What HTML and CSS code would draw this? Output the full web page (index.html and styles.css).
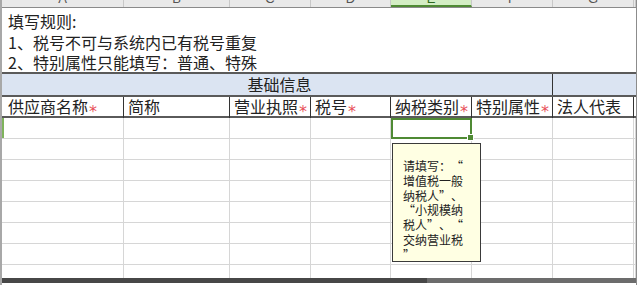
FILE: index.html
```html
<!DOCTYPE html>
<html lang="zh-CN">
<head>
    <meta charset="UTF-8">
    <title>供应商导入模板</title>
    <link rel="stylesheet" href="styles.css">
</head>
<body>
    <div class="sheet">
        <!-- 列标题 -->
        <div class="row colhead">
            <div class="col">A</div>
            <div class="col">B</div>
            <div class="col">C</div>
            <div class="col">D</div>
            <div class="col active">E</div>
            <div class="col">F</div>
            <div class="col">G</div>
            <div class="col"></div>
        </div>

        <!-- 填写规则 -->
        <div class="rules">
            <div>填写规则:</div>
            <div>1、税号不可与系统内已有税号重复</div>
            <div>2、特别属性只能填写：普通、特殊</div>
        </div>

        <!-- 分组标题 -->
        <div class="row band">
            <div class="cell merged">基础信息</div>
            <div class="cell"></div>
        </div>

        <!-- 字段 -->
        <div class="row head">
            <div class="cell">供应商名称<span class="req">*</span></div>
            <div class="cell">简称</div>
            <div class="cell">营业执照<span class="req">*</span></div>
            <div class="cell">税号<span class="req">*</span></div>
            <div class="cell">纳税类别<span class="req">*</span></div>
            <div class="cell">特别属性<span class="req">*</span></div>
            <div class="cell">法人代表</div>
            <div class="cell"></div>
        </div>

        <div class="body" id="rows"></div>

        <div class="scrollbar"><div class="thumb"></div></div>

        <!-- 批注 -->
        <div class="comment">
            请填写：<span class="q open">“</span><br>
            增值税一般<br>
            纳税人<span class="q close">”</span>、<br>
            <span class="q open">“</span>小规模纳<br>
            税人<span class="q close">”</span>、<span class="q open">“</span><br>
            交纳营业税<br>
            <span class="q close">”</span>
        </div>
    </div>

    <script>
        // 生成空白数据行
        var body = document.getElementById('rows');
        for (var r = 0; r < 8; r++) {
            var row = document.createElement('div');
            row.className = 'row data';
            for (var c = 0; c < 8; c++) {
                var cell = document.createElement('div');
                cell.className = 'cell';
                if (r === 0 && c === 0) cell.classList.add('row-mark');
                if (r === 0 && c === 4) {
                    cell.classList.add('selected');
                    var handle = document.createElement('span');
                    handle.className = 'handle';
                    cell.appendChild(handle);
                }
                row.appendChild(cell);
            }
            body.appendChild(row);
        }
    </script>
</body>
</html>
```

FILE: styles.css
```css
body {
    margin: 0;
    width: 640px;
    height: 285px;
    overflow: hidden;
    background: #ffffff;
    font-family: "Noto Sans CJK SC", "Noto Sans", sans-serif;
    color: #222;
}
.sheet {
    position: relative;
    width: 637px;
    height: 285px;
    border-left: 2px solid #a8a8a8;
    border-right: 1px solid #8c8c8c;
    box-sizing: border-box;
    overflow: hidden;
}
.row {
    display: grid;
    grid-template-columns: 122px 106px 81px 80px 81px 81px 81px 1fr;
}
.colhead {
    height: 7px;
    background: #e9e9e9;
    border-bottom: 1px solid #8a8a8a;
    overflow: hidden;
}
.col {
    font-family: "Liberation Sans", sans-serif;
    font-size: 13px;
    line-height: 13px;
    margin-top: -8px;
    text-align: center;
    color: #555;
    border-right: 1px solid #c8c8c8;
}
.col.active {
    background: #d3edc4;
    color: #2d6a1f;
    border-bottom: 2px solid #4f8a34;
}
.rules {
    height: 61px;
    padding: 3px 0 0 6px;
    font-size: 16px;
    line-height: 20.5px;
    border-bottom: 2px solid #5a5a5a;
}
.band {
    height: 21px;
    background: #dbe4f2;
    border-bottom: 2px solid #5a5a5a;
    font-size: 16px;
    line-height: 21px;
}
.band .merged {
    grid-column: 1 / 7;
    text-align: center;
    padding-left: 5px;
    border-right: 1px solid #333;
}
.head {
    height: 19px;
    font-size: 16px;
    line-height: 19px;
    border-bottom: 2px solid #5a5a5a;
}
.head .cell {
    padding-left: 4px;
    border-right: 1px solid #333;
    white-space: nowrap;
}
.head .cell:first-child {
    padding-left: 6px;
}
.head .cell:last-child {
    border-right: none;
}
.req {
    font-family: "DejaVu Sans", sans-serif;
    color: #e8505a;
    font-size: 16px;
    vertical-align: -4px;
    margin-left: 1px;
}
.body {
    height: 160px;
    overflow: hidden;
}
.data {
    height: 21px;
}
.data .cell {
    border-right: 1px solid #d6d6d6;
    border-bottom: 1px solid #d6d6d6;
}
.row-mark {
    box-shadow: inset 2px 0 0 #7fb35c;
}
.selected {
    position: relative;
    outline: 2px solid #4f8a34;
    outline-offset: -2px;
}
.handle {
    position: absolute;
    right: -3px;
    bottom: -3px;
    width: 5px;
    height: 5px;
    background: #4f8a34;
    border: 1px solid #fff;
}
.scrollbar {
    height: 5px;
    background: #6c6c6c;
}
.thumb {
    width: 425px;
    height: 5px;
    background: #474747;
}
.comment {
    position: absolute;
    left: 390px;
    top: 143px;
    width: 89px;
    height: 119px;
    box-sizing: border-box;
    padding: 15px 0 0 10px;
    background: #ffffe3;
    border: 1px solid #3a3a3a;
    font-size: 12px;
    line-height: 14.8px;
    white-space: nowrap;
    color: #222;
}
.q {
    display: inline-block;
    width: 12px;
}
.q.open {
    text-align: right;
}
.q.close {
    text-align: left;
}
```
